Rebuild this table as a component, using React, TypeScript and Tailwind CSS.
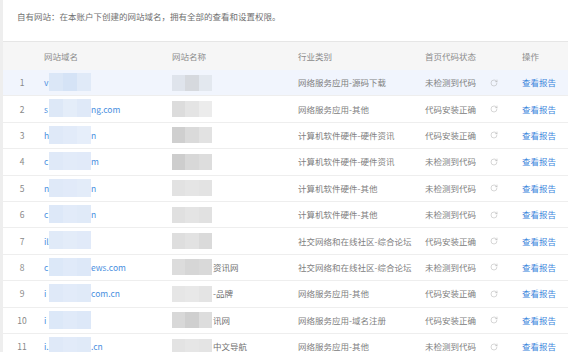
import React from 'react';
import { RotateCw } from 'lucide-react';

type Row = {
  head: string;
  tail: string;
  name: string;
  industry: string;
  ok: boolean;
  mosaic: string[];
  blue: string[];
};

const rows: Row[] = [
  { head: 'v', tail: '', name: '', industry: '网络服务应用-源码下载', ok: false, mosaic: ['#dfe4ec', '#d6d9de', '#e3e8ef'], blue: ['#dbe7f7', '#d5e3f6', '#e0eaf8'] },
  { head: 's', tail: 'ng.com', name: '', industry: '网络服务应用-其他', ok: true, mosaic: ['#dcdcdc', '#e4e4e4', '#ececec'], blue: ['#dde8f7', '#e4edf9', '#dfe9f8'] },
  { head: 'h', tail: 'n', name: '', industry: '计算机软件硬件-硬件资讯', ok: true, mosaic: ['#cfcfcf', '#dadada', '#e2e2e2'], blue: ['#dfe9f8', '#e2ebf9', '#e6eefa'] },
  { head: 'c', tail: 'm', name: '', industry: '计算机软件硬件-硬件资讯', ok: false, mosaic: ['#cdcdcd', '#d8d8d8', '#dddddd'], blue: ['#dfe9f8', '#e2ebf9', '#e1eaf9'] },
  { head: 'n', tail: 'n', name: '', industry: '计算机软件硬件-其他', ok: false, mosaic: ['#e2e2e2', '#e5e5e5', '#e3e3e3'], blue: ['#dfe9f8', '#e1eaf9', '#e3ecf9'] },
  { head: 'c', tail: 'n', name: '', industry: '计算机软件硬件-其他', ok: false, mosaic: ['#e0e0e0', '#e4e4e4', '#e1e1e1'], blue: ['#dde8f8', '#e2ebf9', '#e0eaf8'] },
  { head: 'il', tail: '', name: '', industry: '社交网络和在线社区-综合论坛', ok: true, mosaic: ['#dedede', '#e2e2e2', '#dadada'], blue: ['#e0eaf8', '#e3ecf9', '#e1eaf9'] },
  { head: 'c', tail: 'ews.com', name: '资讯网', industry: '社交网络和在线社区-综合论坛', ok: false, mosaic: ['#dcdcdc', '#d6d6d6', '#d9d9d9'], blue: ['#dce8f8', '#e0eaf9', '#dde8f8'] },
  { head: 'i', tail: 'com.cn', name: '-品牌', industry: '网络服务应用-其他', ok: true, mosaic: ['#e6e6e6', '#e8e8e8', '#e4e4e4'], blue: ['#dfe9f8', '#e2ebf9', '#e0eaf8'] },
  { head: 'i', tail: '', name: '讯网', industry: '网络服务应用-域名注册', ok: true, mosaic: ['#d8d8d8', '#cfcfcf', '#dddddd'], blue: ['#dce8f8', '#e0eaf9', '#dde8f8'] },
  { head: 'i.', tail: '.cn', name: '中文导航', industry: '网络服务应用-其他', ok: false, mosaic: ['#e3e3e3', '#e6e6e6', '#e4e4e4'], blue: ['#dfe9f8', '#e2ebf9', '#e0eaf8'] },
];

const font = { fontFamily: '"Microsoft YaHei", "Noto Sans CJK SC", "Noto Sans", sans-serif' };

const App: React.FC = () => {
  return (
    <div className="flex h-[352px] w-[568px] overflow-hidden bg-[#eeeeee] text-[8.5px] text-[#808080]" style={font}>
      <div className="ml-[3px] flex-1 bg-white">
        {/* intro line */}
        <div className="flex h-[41px] items-start pl-[14px] pt-[10px] text-[#707070]">
          自有网站：在本账户下创建的网站域名，拥有全部的查看和设置权限。
        </div>

        {/* table header */}
        <div className="flex h-[29px] items-center border-t border-[#e6e6e6] bg-[#f6f6f6] text-[#8c8c8c]">
          <div className="w-[38px]" />
          <div className="w-[128px] pl-[3px]">网站域名</div>
          <div className="w-[126px] pl-[3px]">网站名称</div>
          <div className="w-[127px] pl-[3px]">行业类别</div>
          <div className="w-[81px] pl-[3px]">首页代码状态</div>
          <div className="pl-[19px]">操作</div>
        </div>

        {rows.map((r, i) => (
          <div
            key={i}
            className={`flex h-[26.4px] items-center border-b border-[#eeeeee] ${i === 0 ? 'bg-[#f1f5fd]' : 'bg-white'}`}
          >
            <div className="w-[38px] text-center text-[#888]">{i + 1}</div>
            <div className="relative flex h-full w-[128px] items-center pl-[3px] text-[#4a8fe0]">
              <span>{r.head}</span>
              <span className="absolute left-[8px] top-[3px] flex h-[18px] w-[42px]">
                {r.blue.map((c, j) => (
                  <span key={j} className="h-full flex-1" style={{ background: c }} />
                ))}
              </span>
              {r.tail && <span className="absolute left-[50px]">{r.tail}</span>}
            </div>
            <div className="flex h-full w-[126px] items-center pl-[3px]">
              <span className="flex h-[16px] w-[40px]">
                {r.mosaic.map((c, j) => (
                  <span key={j} className="h-full flex-1" style={{ background: c }} />
                ))}
              </span>
              {r.name && <span className="ml-[1px] text-[#707070]">{r.name}</span>}
            </div>
            <div className="w-[127px] pl-[3px]">{r.industry}</div>
            <div className="w-[63px] pl-[3px]">{r.ok ? '代码安装正确' : '未检测到代码'}</div>
            <div className="flex w-[18px] justify-center">
              <RotateCw size={8} strokeWidth={1.4} className="text-[#a8a8a8]" />
            </div>
            <div className="pl-[19px] text-[#3d86dc]">查看报告</div>
          </div>
        ))}
      </div>
    </div>
  );
};

export default App;
